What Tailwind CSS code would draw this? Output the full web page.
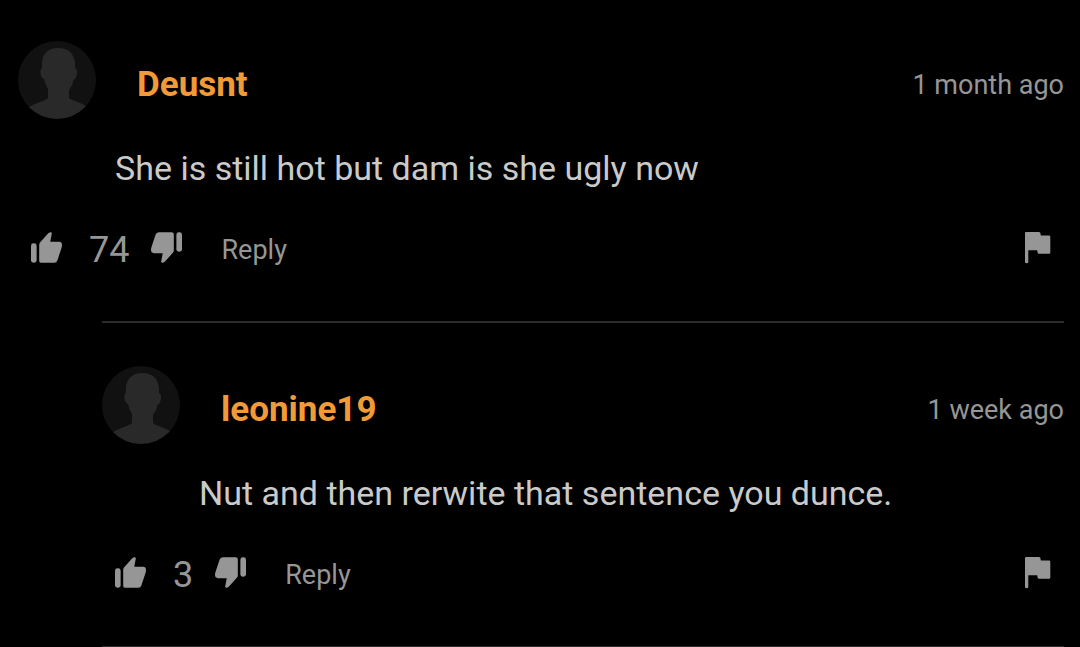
<!DOCTYPE html>
<html lang="en">
<head>
  <meta charset="UTF-8">
  <meta name="viewport" content="width=device-width, initial-scale=1.0">
  <title>Comments</title>
  <script src="https://cdn.jsdelivr.net/npm/@tailwindcss/browser@4"></script>
</head>
<body class="bg-black font-[Roboto,sans-serif] text-[#969696] overflow-x-hidden">
  <!-- Shared icons -->
  <svg class="hidden">
    <symbol id="avatar" viewBox="0 0 78 78">
      <rect width="78" height="78" fill="#111111"/>
      <path d="M40 7C30 7 24 13 24 23L24 27Q22 28 22.500 32Q23 37 26 38Q27 43 30 48L30 57Q28 59 22 61Q14 64 9 67V78H72V67Q65 63 57 60Q53 59 51 57L51 49Q55 44 55.500 39Q58 38 59 33Q59.500 28 57 27L57 22C56 12 50 7 40 7Z" fill="#292929"/>
    </symbol>
    <symbol id="thumb" viewBox="0 0 31.4 31.4">
      <rect x="0" y="11.500" width="5.700" height="19.700" rx="2.500"/>
      <path d="M8.300 13Q8.300 11.500 9.300 10.300L17.500 1.200Q19 0 20.300 0.300Q21.300 0.600 21 2L19.500 10H28.500Q31.500 10.200 31.400 13.500Q31.400 15 30.800 16.500L26.800 28.500Q26 31.200 23.500 31.200H10.500Q8.300 31.200 8.300 29Z"/>
    </symbol>
    <symbol id="flag" viewBox="0 0 26 32">
      <path d="M1 0H14Q15.300 0 15.500 1.500L15.800 3.500H24Q25.300 3.500 25.300 4.800V20.500Q25.300 21.800 24 21.800H14Q12.800 21.800 12.600 20.500L12.200 18.300H3.300V30Q3.300 31.200 1.700 31.200Q0 31.200 0 30V1Q0 0 1 0Z"/>
    </symbol>
  </svg>

  <main class="pl-[18px] pr-4">
    <!-- Comment -->
    <article class="pt-[41px] pb-[57px]">
      <header class="flex items-center">
        <svg class="size-[78px] shrink-0 rounded-full"><use href="#avatar"/></svg>
        <a href="#" class="ml-[41px] pt-2.5 text-[35px] leading-10 font-bold text-[#f09a38]">Deusnt</a>
        <time class="ml-auto pt-2.5 text-[27px] leading-8">1 month ago</time>
      </header>
      <p class="mt-[29px] pl-[97px] text-[34px] leading-10 text-[#cacaca]">She is still hot but dam is she ugly now</p>
      <div class="mt-11 flex h-8 items-start px-[13px]">
        <button type="button" aria-label="Like"><svg class="size-[31px] fill-current"><use href="#thumb"/></svg></button>
        <span class="ml-[27px] mr-[22px] pt-0.5 text-[36px] leading-8">74</span>
        <button type="button" aria-label="Dislike"><svg class="size-[31px] rotate-180 fill-current"><use href="#thumb"/></svg></button>
        <button type="button" class="ml-[39px] pt-0.5 text-[27px] leading-8">Reply</button>
        <button type="button" aria-label="Report" class="ml-auto"><svg class="h-8 w-[26px] fill-current"><use href="#flag"/></svg></button>
      </div>
    </article>

    <!-- Replies -->
    <section class="ml-[84px]">
      <article class="border-y-2 border-[#2b2b2b] pt-[43px] pb-[57px]">
        <header class="flex items-center">
          <svg class="size-[78px] shrink-0 rounded-full"><use href="#avatar"/></svg>
          <a href="#" class="ml-[41px] pt-2.5 text-[35px] leading-10 font-bold text-[#f09a38]">leonine19</a>
          <time class="ml-auto pt-2.5 text-[27px] leading-8">1 week ago</time>
        </header>
        <p class="mt-[29px] pl-[97px] text-[34px] leading-10 text-[#cacaca]">Nut and then rerwite that sentence you dunce.</p>
        <div class="mt-11 flex h-8 items-start px-[13px]">
          <button type="button" aria-label="Like"><svg class="size-[31px] fill-current"><use href="#thumb"/></svg></button>
          <span class="ml-[27px] mr-[22px] pt-0.5 text-[36px] leading-8">3</span>
          <button type="button" aria-label="Dislike"><svg class="size-[31px] rotate-180 fill-current"><use href="#thumb"/></svg></button>
          <button type="button" class="ml-[39px] pt-0.5 text-[27px] leading-8">Reply</button>
          <button type="button" aria-label="Report" class="ml-auto"><svg class="h-8 w-[26px] fill-current"><use href="#flag"/></svg></button>
        </div>
      </article>
    </section>
  </main>
</body>
</html>
